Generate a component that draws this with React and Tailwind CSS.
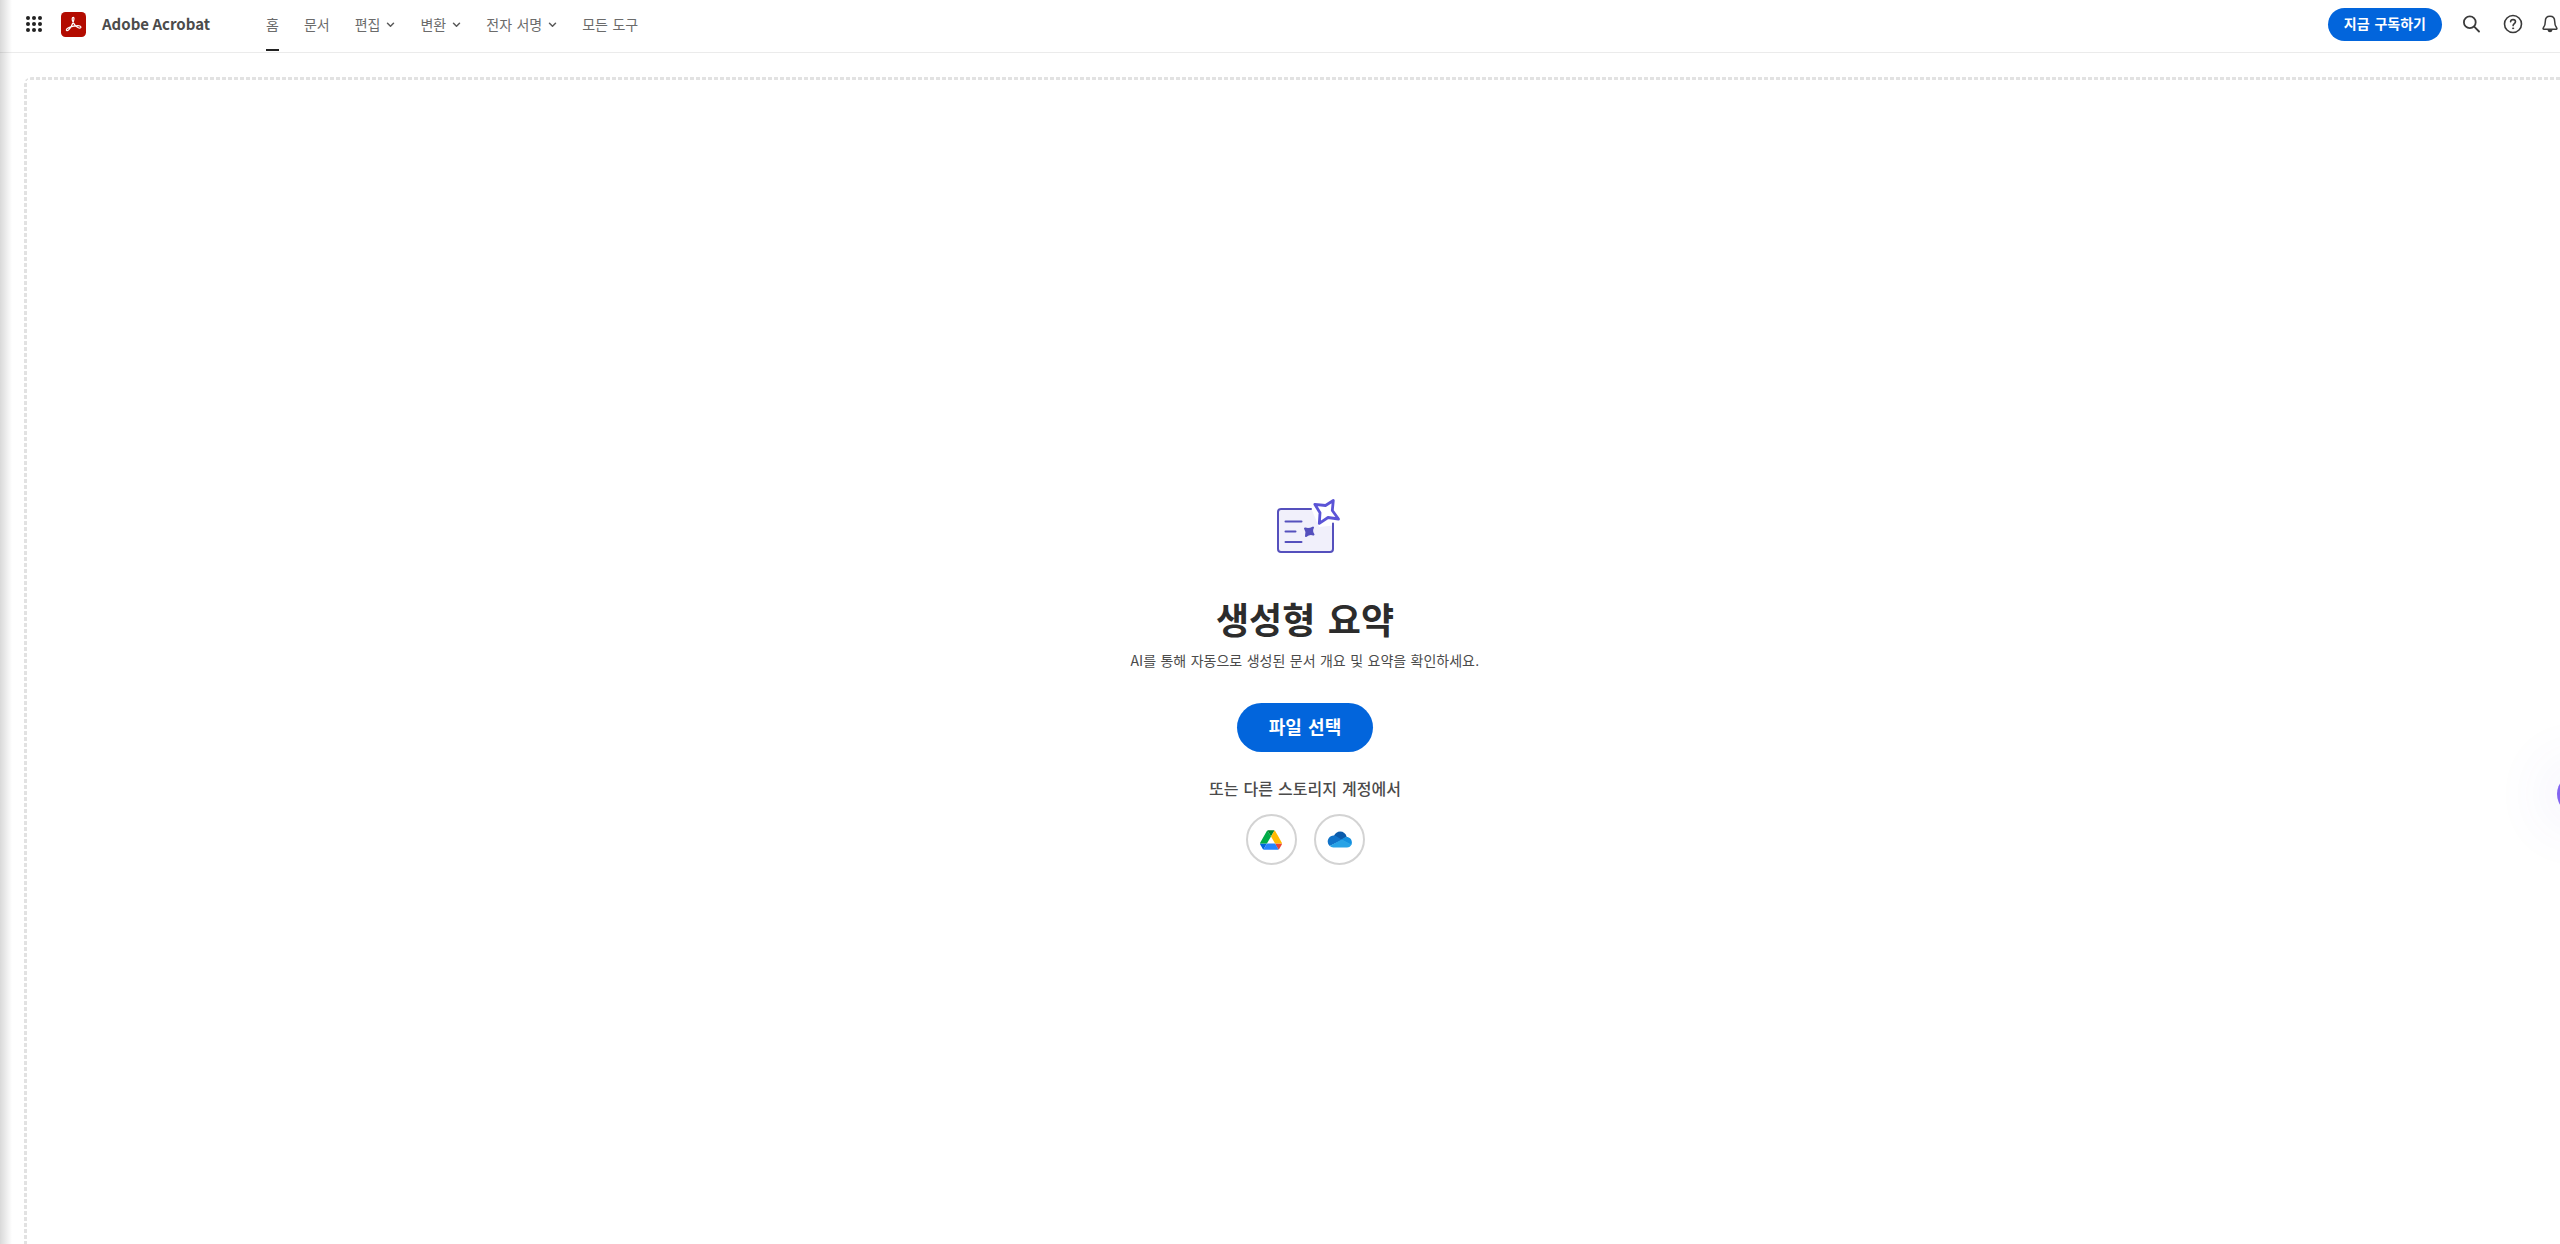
import React from "react";

const links = [
  { label: "홈", active: true },
  { label: "문서" },
  { label: "편집", menu: true },
  { label: "변환", menu: true },
  { label: "전자 서명", menu: true },
  { label: "모든 도구" },
];

function AppsIcon() {
  const at = [2, 8, 14];
  return (
    <svg viewBox="0 0 16 16" className="h-4 w-4" fill="#222222">
      {at.map((y) => at.map((x) => <circle key={`${x}-${y}`} cx={x} cy={y} r="2" />))}
    </svg>
  );
}

function AcrobatLogo() {
  return (
    <svg viewBox="0 0 25 25" className="h-[25px] w-[25px]">
      <rect width="25" height="25" rx="4.5" fill="#b30b00" />
      <path
        d="M12.3 5.3c-1.5 0-1.3 2.6-.5 4.3 1 2.300 3.100 5.300 5.500 6.200 1.600.6 2.900.1 2.600-.9-.5-1.500-4.400-1.400-7.200-.8-2.700.6-6.800 2-7.300 3.500-.3 1 .9 1.500 2 .5 1.800-1.600 4.200-6.200 5-8.700.6-1.800.9-4.100-.1-4.100z"
        fill="none"
        stroke="#fff"
        strokeWidth="1.200"
        strokeLinejoin="round"
      />
    </svg>
  );
}

function Chevron() {
  return (
    <svg viewBox="0 0 9 6" className="h-[6px] w-[9px]" fill="none" stroke="#5a5a5a" strokeWidth="1.500" strokeLinecap="round" strokeLinejoin="round">
      <path d="M1.500 1.300l3 3 3-3" />
    </svg>
  );
}

function SearchIcon() {
  return (
    <svg viewBox="0 0 18 18" className="h-[18px] w-[18px]" fill="none" stroke="#3a3a3a" strokeWidth="1.800" strokeLinecap="round">
      <circle cx="7.800" cy="7.300" r="5.900" />
      <path d="M12.200 11.700L17 16.500" />
    </svg>
  );
}

function HelpIcon() {
  return (
    <svg viewBox="0 0 20 20" className="h-5 w-5" fill="none" stroke="#3a3a3a" strokeWidth="1.600" strokeLinecap="round">
      <circle cx="10" cy="10" r="8.500" />
      <path d="M7.600 7.800c.1-1.500 1.100-2.200 2.400-2.200s2.500.8 2.500 2.100c0 1.900-2.400 1.900-2.400 3.900" />
      <circle cx="10.050" cy="14.300" r=".6" fill="#3a3a3a" strokeWidth=".8" />
    </svg>
  );
}

function BellIcon() {
  return (
    <svg viewBox="0 0 18 20" className="h-5 w-[18px]" fill="none" stroke="#3a3a3a" strokeWidth="1.500" strokeLinejoin="round" strokeLinecap="round">
      <path d="M9 2.300c-3 0-4.700 2.300-4.700 5.200 0 4-.5 4.500-1.900 6.200-.6.8-.4 1.600.5 1.600h12.200c.9 0 1.100-.8.5-1.600-1.400-1.700-1.900-2.200-1.900-6.200 0-2.900-1.700-5.200-4.700-5.200z" />
      <path d="M7.200 15.800c.2 1.100.9 1.700 1.800 1.700s1.600-.6 1.800-1.700z" fill="#3a3a3a" />
    </svg>
  );
}

function SummaryIcon() {
  return (
    <svg viewBox="0 0 70 56" className="h-14 w-[70px]" fill="none" stroke="#5550bd" strokeWidth="2" strokeLinecap="round" strokeLinejoin="round">
      <path d="M41.500 11H11a3 3 0 0 0-3 3v37a3 3 0 0 0 3 3h49a3 3 0 0 0 3-3V27.500L49 29z" fill="#f1f0fb" stroke="none" />
      <path d="M41 11H11a3 3 0 0 0-3 3v37a3 3 0 0 0 3 3h49a3 3 0 0 0 3-3V25.500" />
      <path d="M15.500 23.500h16M15.500 33.500h10M15.500 44h16" />
      <path d="M63.300 2.500L55.500 7.500L44.800 6.300L50 14.800L49.300 25.300L58 19.500L68.500 21L62.300 12.500z" fill="#fff" stroke="#5b54d6" strokeWidth="2.800" />
      <path d="M43 29.500Q41 33 43.500 36.500Q39.500 35 36 38Q37.500 34 35 30.500Q39 32 43 29.500z" fill="#5550bd" />
    </svg>
  );
}

function DriveIcon() {
  return (
    <svg viewBox="0 0 87.300 78" className="h-5 w-[22px]">
      <path d="m6.600 66.850 3.850 6.650c.8 1.400 1.950 2.500 3.300 3.300l13.750-23.800h-27.500c0 1.550.4 3.100 1.200 4.500z" fill="#0066da" />
      <path d="m43.650 25-13.750-23.800c-1.350.8-2.500 1.900-3.300 3.300l-25.400 44a9.060 9.060 0 0 0 -1.200 4.500h27.500z" fill="#00ac47" />
      <path d="m73.550 76.800c1.350-.8 2.500-1.900 3.300-3.300l1.600-2.750 7.650-13.250c.8-1.400 1.200-2.950 1.200-4.500h-27.502l5.852 11.500z" fill="#ea4335" />
      <path d="m43.650 25 13.750-23.800c-1.350-.8-2.900-1.200-4.500-1.200h-18.500c-1.600 0-3.150.45-4.500 1.200z" fill="#00832d" />
      <path d="m59.800 53h-32.300l-13.750 23.800c1.350.8 2.900 1.200 4.500 1.200h50.800c1.600 0 3.150-.45 4.500-1.200z" fill="#2684fc" />
      <path d="m73.400 26.500-12.700-22c-.8-1.400-1.950-2.500-3.300-3.300l-13.750 23.800 16.150 28h27.450c0-1.550-.4-3.100-1.200-4.500z" fill="#ffba00" />
    </svg>
  );
}

function OneDriveIcon() {
  return (
    <svg viewBox="0 0 25 17" className="h-[17px] w-[25px]">
      <path d="M7 4.800C8.200 2.200 10.400.5 13.200.5c3 0 5.600 2 6.500 5.200L14.500 9.500z" fill="#0a5bab" />
      <path d="M2.700 14.900A6 6 0 0 1 6.200 4.500c1.500 0 2.500.4 3.500 1l5.700 3.500z" fill="#1173c8" />
      <path d="M14.200 8.800l2.700-2a5.500 5.500 0 0 1 2.700-.7c3 0 5.300 2.400 5.300 5.400q0 1.300-.6 2.400z" fill="#1490df" />
      <path d="M14.700 8.600l9.800 4.900A5 5 0 0 1 19.800 16.500H6.200a6 6 0 0 1-3.500-1.600z" fill="#28a3e6" />
    </svg>
  );
}

export default function App() {
  return (
    <div className="relative h-screen overflow-hidden bg-white font-['DejaVu_Sans','Noto_Sans_CJK_KR',sans-serif] text-[#4b4b4b]">
      <div className="-mr-[50px] flex h-full flex-col">
        <header className="flex h-[53px] shrink-0 items-start border-b border-[#ebebeb] pl-[26px] pr-[51px]">
          <div className="flex h-12 items-center">
            <button aria-label="앱" className="mr-[19px]"><AppsIcon /></button>
            <a href="#" className="flex items-center gap-4 font-['Noto_Sans_CJK_KR',sans-serif] text-[15px] font-bold text-[#4b4b4b]">
              <AcrobatLogo />
              Adobe Acrobat
            </a>
          </div>
          <nav className="ml-14 flex items-start gap-[25px] text-sm text-[#6b6b6b]">
            {links.map((l) => (
              <a key={l.label} href="#" className={`flex h-[51px] items-center gap-[6px] border-b-2 ${l.active ? "border-[#222222]" : "border-transparent"}`}>
                {l.label}
                {l.menu && <Chevron />}
              </a>
            ))}
          </nav>
          <div className="ml-auto flex h-12 items-center">
            <button className="mr-5 h-[33px] rounded-full bg-[#0265dc] px-4 text-sm font-bold text-white">지금 구독하기</button>
            <button aria-label="검색" className="mr-[23px]"><SearchIcon /></button>
            <button aria-label="도움말" className="mr-[18px]"><HelpIcon /></button>
            <button aria-label="알림"><BellIcon /></button>
          </div>
        </header>
        <main className="mx-6 -mb-[42px] mt-6 flex flex-1 flex-col items-center justify-center rounded-lg bg-[image:repeating-linear-gradient(90deg,#e2e2e2_0_4px,transparent_4px_6px),repeating-linear-gradient(180deg,#e2e2e2_0_4px,transparent_4px_6px)] bg-[size:100%_3px,3px_100%] bg-no-repeat">
          <SummaryIcon />
          <h1 className="mt-10 text-4xl leading-[56px] font-bold text-[#2c2c2c]">생성형 요약</h1>
          <p className="text-sm leading-5"><span className="font-['Noto_Sans_CJK_KR',sans-serif]">AI</span>를 통해 자동으로 생성된 문서 개요 및 요약을 확인하세요.</p>
          <button className="mt-8 h-[49px] rounded-full bg-[#0265dc] px-8 text-lg font-bold text-white">파일 선택</button>
          <p className="mt-[26px] text-base leading-6 font-medium">또는 다른 스토리지 계정에서</p>
          <div className="mt-3 flex gap-[17px]">
            <button aria-label="Google Drive" className="flex h-[51px] w-[51px] items-center justify-center rounded-full border-2 border-[#d3d3d3]"><DriveIcon /></button>
            <button aria-label="OneDrive" className="flex h-[51px] w-[51px] items-center justify-center rounded-full border-2 border-[#d3d3d3]"><OneDriveIcon /></button>
          </div>
        </main>
      </div>
      <div className="pointer-events-none absolute inset-y-0 left-0 w-3 bg-linear-to-r from-black/15 to-transparent" />
      <button aria-label="도우미" className="absolute top-[774px] -right-[37px] h-10 w-10 rounded-full bg-[#8264f0] shadow-[0_0_60px_12px_rgba(90,80,220,0.08)]" />
    </div>
  );
}
